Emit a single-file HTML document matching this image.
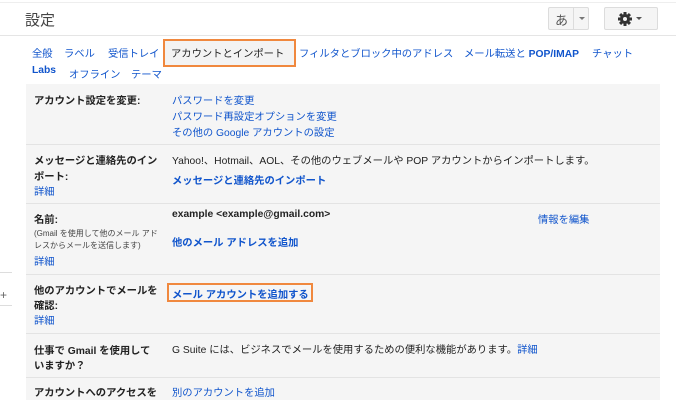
<!DOCTYPE html>
<html><head><meta charset="utf-8"><style>
*{margin:0;padding:0;box-sizing:border-box}
body{width:676px;height:400px;overflow:hidden;background:#fff;font-family:"Liberation Sans","Noto Sans CJK JP",sans-serif;font-size:10.3px;color:#222;position:relative}
.a{position:absolute;white-space:nowrap}
.l{color:#1155cc}
.b{font-weight:bold}
.hr{position:absolute;left:26px;width:634px;height:1px;background:#e3e3e3}
</style></head><body>
<div class="a" style="left:0;top:2px;width:676px;height:1px;background:#eee"></div>
<div class="a" style="left:25px;top:9px;font-size:15px;color:#444">設定</div>
<div class="a" style="left:0;top:35px;width:676px;height:1px;background:#e5e5e5"></div>
<div class="a" style="left:548px;top:7px;width:41px;height:23px;border:1px solid #dcdcdc;background:#f5f5f5;border-radius:2px"></div>
<div class="a" style="left:555px;top:10px;font-size:13px;color:#555">あ</div>
<div class="a" style="left:573px;top:8px;width:1px;height:21px;background:#dcdcdc"></div>
<div class="a" style="left:579px;top:17px;border:3px solid transparent;border-top:3px solid #777"></div>
<div class="a" style="left:604px;top:7px;width:54px;height:23px;border:1px solid #dcdcdc;background:#f5f5f5;border-radius:2px"></div>
<svg class="a" style="left:617px;top:11px" width="16" height="16" viewBox="0 0 16 16"><g fill="#333"><circle cx="8" cy="8" r="5"/><rect x="6.5" y="1" width="3" height="14"/><rect x="1" y="6.5" width="14" height="3"/><rect x="6.5" y="1" width="3" height="14" transform="rotate(45 8 8)"/><rect x="6.5" y="1" width="3" height="14" transform="rotate(-45 8 8)"/></g><circle cx="8" cy="8" r="2" fill="#f5f5f5"/></svg>
<div class="a" style="left:636px;top:17px;border:3px solid transparent;border-top:3px solid #555"></div>

<div class="a l" style="left:32px;top:45px">全般</div>
<div class="a l" style="left:64px;top:45px">ラベル</div>
<div class="a l" style="left:108px;top:45px">受信トレイ</div>
<div class="a" style="left:163px;top:39px;width:133px;height:28px;border:2px solid #f0883e;background:#f3f3f3"></div>
<div class="a" style="left:171px;top:45px;color:#222">アカウントとインポート</div>
<div class="a l" style="left:299px;top:45px">フィルタとブロック中のアドレス</div>
<div class="a l" style="left:464px;top:45px">メール転送と <b>POP/IMAP</b></div>
<div class="a l" style="left:592px;top:45px">チャット</div>
<div class="a l b" style="left:32px;top:65px">Labs</div>
<div class="a l" style="left:69px;top:66px">オフライン</div>
<div class="a l" style="left:131px;top:66px">テーマ</div>

<div class="a" style="left:26px;top:84px;width:634px;height:316px;background:#f5f5f5"></div>
<div class="hr" style="top:144px"></div>
<div class="hr" style="top:203px"></div>
<div class="hr" style="top:274px"></div>
<div class="hr" style="top:333px"></div>
<div class="hr" style="top:377px"></div>

<div class="a b" style="left:34px;top:92px">アカウント設定を変更:</div>
<div class="a l" style="left:172px;top:92px">パスワードを変更</div>
<div class="a l" style="left:172px;top:108px">パスワード再設定オプションを変更</div>
<div class="a l" style="left:172px;top:124px">その他の Google アカウントの設定</div>

<div class="a b" style="left:34px;top:152px">メッセージと連絡先のイン</div>
<div class="a b" style="left:34px;top:168px">ポート:</div>
<div class="a l" style="left:34px;top:183px">詳細</div>
<div class="a" style="left:172px;top:152px">Yahoo!、Hotmail、AOL、その他のウェブメールや POP アカウントからインポートします。</div>
<div class="a l b" style="left:172px;top:172px">メッセージと連絡先のインポート</div>

<div class="a b" style="left:34px;top:211px">名前:</div>
<div class="a" style="left:34px;top:228px;font-size:8px;color:#444">(Gmail を使用して他のメール アド</div>
<div class="a" style="left:34px;top:240px;font-size:8px;color:#444">レスからメールを送信します)</div>
<div class="a l" style="left:34px;top:253px">詳細</div>
<div class="a b" style="left:172px;top:209px">example &lt;example@gmail.com&gt;</div>
<div class="a l" style="left:538px;top:211px">情報を編集</div>
<div class="a l b" style="left:172px;top:234px">他のメール アドレスを追加</div>

<div class="a b" style="left:34px;top:282px">他のアカウントでメールを</div>
<div class="a b" style="left:34px;top:297px">確認:</div>
<div class="a l" style="left:34px;top:312px">詳細</div>
<div class="a" style="left:167px;top:283px;width:146px;height:19px;border:2px solid #f0883e"></div>
<div class="a l b" style="left:172px;top:286px">メール アカウントを追加する</div>

<div class="a b" style="left:34px;top:342px">仕事で Gmail を使用して</div>
<div class="a b" style="left:34px;top:357px">いますか？</div>
<div class="a" style="left:172px;top:341px">G Suite には、ビジネスでメールを使用するための便利な機能があります。<span class="l">詳細</span></div>

<div class="a b" style="left:34px;top:384px">アカウントへのアクセスを</div>
<div class="a l" style="left:172px;top:384px">別のアカウントを追加</div>

<div class="a" style="left:0;top:272px;width:12px;height:1px;background:#ddd"></div>
<div class="a" style="left:0;top:288px;font-size:12px;color:#666">+</div>
<div class="a" style="left:0;top:305px;width:12px;height:1px;background:#ddd"></div>
</body></html>
